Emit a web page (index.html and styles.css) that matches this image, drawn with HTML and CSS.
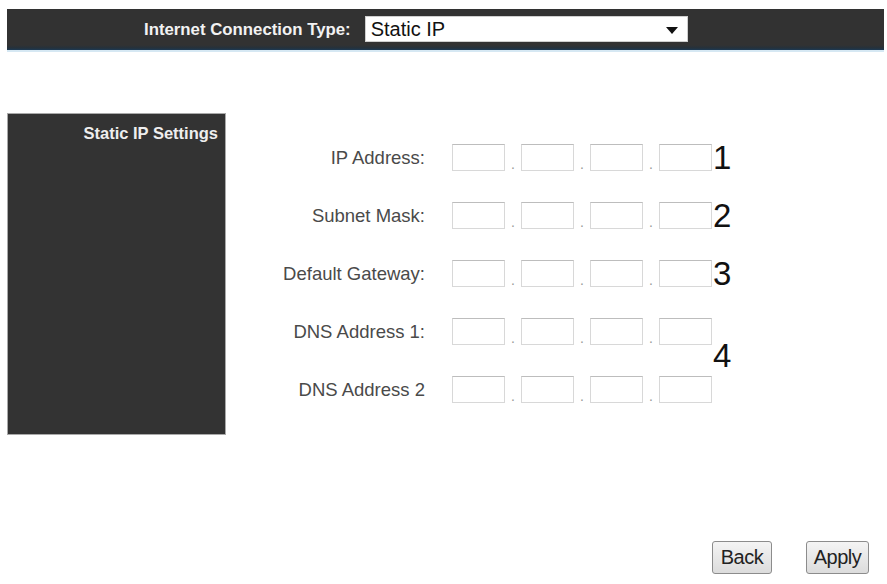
FILE: index.html
```html
<!DOCTYPE html>
<html>
<head>
<meta charset="utf-8">
<link rel="stylesheet" href="styles.css">
</head>
<body>
<div class="topbar">
  <span class="type-label">Internet Connection Type:</span>
  <div class="select"><span>Static IP</span><span class="arrow"></span></div>
</div>
<div class="content">
  <div class="side"><span class="side-title">Static IP Settings</span></div>
  <div class="form">
    <div class="label r1">IP Address:</div>
    <div class="ip r1"><span class="box"></span><span class="dot">.</span><span class="box"></span><span class="dot">.</span><span class="box"></span><span class="dot">.</span><span class="box"></span></div>
    <div class="num r1">1</div>

    <div class="label r2">Subnet Mask:</div>
    <div class="ip r2"><span class="box"></span><span class="dot">.</span><span class="box"></span><span class="dot">.</span><span class="box"></span><span class="dot">.</span><span class="box"></span></div>
    <div class="num r2">2</div>

    <div class="label r3">Default Gateway:</div>
    <div class="ip r3"><span class="box"></span><span class="dot">.</span><span class="box"></span><span class="dot">.</span><span class="box"></span><span class="dot">.</span><span class="box"></span></div>
    <div class="num r3">3</div>

    <div class="label r4">DNS Address 1:</div>
    <div class="ip r4"><span class="box"></span><span class="dot">.</span><span class="box"></span><span class="dot">.</span><span class="box"></span><span class="dot">.</span><span class="box"></span></div>
    <div class="num r45">4</div>

    <div class="label r5">DNS Address 2</div>
    <div class="ip r5"><span class="box"></span><span class="dot">.</span><span class="box"></span><span class="dot">.</span><span class="box"></span><span class="dot">.</span><span class="box"></span></div>
  </div>
</div>
<div class="buttons">
  <button class="btn back">Back</button>
  <button class="btn apply">Apply</button>
</div>
</body>
</html>
```

FILE: styles.css
```css
html, body {
  margin: 0;
  padding: 0;
  background: #fff;
  font-family: "Liberation Sans", Arial, sans-serif;
}

.topbar {
  margin: 9px 3px 0 7px;
  height: 41px;
  background: linear-gradient(to bottom, #323232 0, #323232 36px, #25313b 39px, #1d3a55 41px);
  box-shadow: 0 2px 0 #d6e8f3;
  display: flex;
  align-items: center;
  padding-left: 137px;
  box-sizing: border-box;
}

.type-label {
  color: #f2f2f2;
  font-weight: bold;
  font-size: 16.8px;
  margin-right: 14px;
}

.select {
  width: 323px;
  height: 26px;
  margin-top: -1px;
  background: #fff;
  border: 1px solid #cfcfcf;
  box-sizing: border-box;
  display: flex;
  align-items: center;
  justify-content: space-between;
  padding: 0 9px 0 5px;
  font-size: 20px;
  color: #111;
}

.arrow {
  width: 0;
  height: 0;
  border-left: 6px solid transparent;
  border-right: 6px solid transparent;
  border-top: 7px solid #111;
  margin-top: 2px;
}

.content {
  display: flex;
  align-items: flex-start;
  margin-top: 63px;
}

.side {
  margin-left: 7px;
  width: 219px;
  height: 322px;
  background: #333;
  border: 1px solid #a9a9a9;
  box-sizing: border-box;
  display: flex;
  justify-content: flex-end;
  padding: 10px 7px 0 0;
}

.side-title {
  color: #eee;
  font-weight: bold;
  font-size: 16.5px;
  height: 20px;
}

.form {
  display: grid;
  grid-template-columns: 199px 287px 30px;
  grid-template-rows: repeat(5, 27px);
  row-gap: 31px;
  column-gap: 0;
  padding-top: 31px;
}

.r1 { grid-row: 1; }
.r2 { grid-row: 2; }
.r3 { grid-row: 3; }
.r4 { grid-row: 4; }
.r5 { grid-row: 5; }
.r45 { grid-row: 4 / 6; }

.label {
  grid-column: 1;
  text-align: right;
  font-size: 18.5px;
  color: #4a4a4a;
  align-self: center;
}

.ip {
  grid-column: 2;
  display: flex;
  align-items: stretch;
  padding-left: 27px;
}

.box {
  width: 53px;
  height: 27px;
  box-sizing: border-box;
  border: 1px solid #d8d8d8;
  border-top-color: #bdbdbd;
  background: #fff;
}

.dot {
  width: 16px;
  text-align: center;
  font-size: 14px;
  color: #999;
  align-self: flex-end;
  line-height: 14px;
}

.num {
  grid-column: 3;
  font-size: 33px;
  color: #111;
  line-height: 27px;
  padding-left: 1px;
}

.r45 {
  align-self: center;
  margin-top: -10px;
}

.buttons {
  display: flex;
  justify-content: flex-end;
  gap: 34px;
  margin-top: 106px;
  padding-right: 18px;
}

.btn {
  height: 33px;
  font-family: "Liberation Sans", Arial, sans-serif;
  font-size: 20px;
  color: #222;
  background: linear-gradient(to bottom, #f4f4f4, #dcdcdc);
  border: 1px solid #8c8c8c;
  border-radius: 3px;
  padding: 0;
  letter-spacing: -0.5px;
}

.back { width: 60px; }
.apply { width: 63px; }
```
